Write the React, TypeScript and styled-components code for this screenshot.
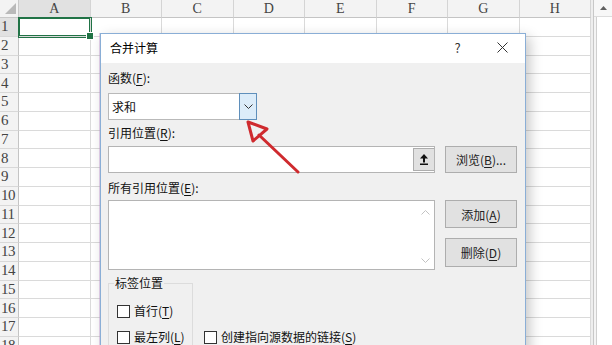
import React from 'react';
import styled, { createGlobalStyle } from 'styled-components';

const Global = createGlobalStyle`
  html, body { margin: 0; padding: 0; background: #fff; overflow: hidden; }
  #root { width: 612px; height: 345px; position: relative; overflow: hidden; }
  * { box-sizing: border-box; }
`;

const Screen = styled.div`
  position: relative;
  width: 612px;
  height: 345px;
  overflow: hidden;
  display: flex;
  background: #fff;
`;

/* ---------- spreadsheet ---------- */

const SheetGrid = styled.div`
  display: grid;
  grid-template-columns: 19px repeat(8, 71.5px);
  grid-template-rows: 18px;
  grid-auto-rows: 18.75px;
  align-content: start;
  font-family: "Liberation Serif", "DejaVu Serif", serif;
  color: #444;
`;

const Corner = styled.div`
  background: #f3f3f3;
  border-right: 1px solid #c8c8c8;
  border-bottom: 1px solid #c8c8c8;
  display: flex;
  align-items: flex-end;
  justify-content: flex-end;
  padding: 0 2px 3px 0;
`;

const ColHeader = styled.div<{ $active?: boolean }>`
  background: ${p => (p.$active ? '#e1e1e1' : '#f3f3f3')};
  border-right: 1px solid #d4d4d4;
  border-bottom: 1px solid #c4c4c4;
  display: flex;
  align-items: center;
  justify-content: center;
  font-size: 14px;
  padding-top: 1px;
`;

const RowHeader = styled.div<{ $active?: boolean }>`
  background: ${p => (p.$active ? '#e1e1e1' : '#f3f3f3')};
  border-right: 1px solid #c4c4c4;
  border-bottom: 1px solid #d8d8d8;
  display: flex;
  align-items: center;
  padding-left: 1px;
  font-size: 15px;
  letter-spacing: -0.5px;
`;

const Cell = styled.div<{ $selected?: boolean }>`
  position: relative;
  background: #fff;
  border-right: 1px solid #dadada;
  border-bottom: 1px solid #dadada;
  ${p =>
    p.$selected
      ? `
    box-shadow: 0 0 0 1px #217346, inset 0 0 0 1px #217346;
    z-index: 1;
    &::after {
      content: '';
      position: absolute;
      right: -4px;
      bottom: -4px;
      width: 6px;
      height: 6px;
      background: #217346;
      border: 1px solid #fff;
    }
  `
      : ''}
`;

const ScrollArea = styled.div`
  flex: 1;
  display: flex;
  background: #eeeeee;
  padding-left: 2px;
`;

const ScrollTrack = styled.div`
  flex: 1;
  display: flex;
  flex-direction: column;
  border-left: 1px solid #c8c8c8;
  background: #f4f4f4;
`;

const ScrollUp = styled.div`
  height: 17px;
  display: flex;
  align-items: center;
  justify-content: center;
  background: #f7f7f7;
  border-bottom: 1px solid #dcdcdc;
`;

const ScrollThumb = styled.div`
  flex: 1;
  margin-left: 2px;
  background: #fff;
  border-left: 1px solid #cfcfcf;
`;

/* ---------- dialog ---------- */

const Dialog = styled.div`
  position: absolute;
  left: 100px;
  top: 33px;
  width: 426px;
  height: 330px;
  border: 1px solid #8aaed6;
  background: #f0f0f0;
  box-shadow: -1px 0 0 rgba(190, 150, 205, 0.45), 4px 4px 12px rgba(0, 0, 0, 0.22);
  font-family: "Noto Sans CJK SC", "Noto Sans", sans-serif;
  font-size: 12px;
  color: #111;
  z-index: 5;
  display: flex;
  flex-direction: column;
`;

const TitleBar = styled.div`
  height: 29px;
  background: #fff;
  display: flex;
  align-items: center;
  padding-left: 9px;
  padding-bottom: 2px;
`;

const Title = styled.div`
  flex: 1;
  font-size: 12px;
  color: #000;
`;

const TitleButton = styled.div`
  width: 45px;
  height: 27px;
  display: flex;
  align-items: center;
  justify-content: center;
  font-size: 13px;
  color: #333;
`;

const Body = styled.div`
  padding: 0 7px;
  display: flex;
  flex-direction: column;
`;

const FieldLabel = styled.div<{ $top: number }>`
  margin-top: ${p => p.$top}px;
  height: 16px;
  line-height: 16px;
`;

const Row = styled.div<{ $top: number }>`
  margin-top: ${p => p.$top}px;
  display: grid;
  grid-template-columns: 327px 72px;
  column-gap: 10px;
  align-items: start;
`;

const SelectBox = styled.div`
  margin-top: 7px;
  width: 149px;
  height: 27px;
  display: flex;
  background: #fff;
  border: 1px solid #b9b9b9;
`;

const SelectValue = styled.div`
  flex: 1;
  padding-left: 3px;
  line-height: 25px;
`;

const DropButton = styled.div`
  width: 18px;
  margin: -1px -1px -1px 0;
  background: #dcecf9;
  border: 1px solid #5f8fbb;
  display: flex;
  align-items: center;
  justify-content: center;
`;

const TextField = styled.div`
  height: 27px;
  background: #fff;
  border: 1px solid #b4b4b4;
  display: flex;
  justify-content: flex-end;
`;

const PickButton = styled.div`
  width: 21px;
  margin: 1px 0;
  background: #e1e1e1;
  border: 1px solid #adadad;
  border-right: none;
  display: flex;
  align-items: center;
  justify-content: center;
`;

const Button = styled.div<{ $h: number }>`
  height: ${p => p.$h}px;
  background: #e1e1e1;
  border: 1px solid #adadad;
  display: flex;
  align-items: center;
  justify-content: center;
  color: #222;
`;

const ButtonStack = styled.div`
  display: flex;
  flex-direction: column;
  gap: 10px;
`;

const ListField = styled.div`
  height: 70px;
  background: #fff;
  border: 1px solid #b4b4b4;
  display: flex;
  justify-content: flex-end;
`;

const ListScroll = styled.div`
  width: 17px;
  display: flex;
  flex-direction: column;
  justify-content: space-between;
  align-items: center;
  padding: 9px 0 6px;
`;

const Bottom = styled.div`
  margin-top: 5px;
  display: flex;
  align-items: flex-start;
  gap: 11px;
`;

const GroupBox = styled.fieldset`
  width: 85px;
  margin: 0;
  padding: 0 0 14px 8px;
  border: 1px solid #dcdcdc;
  min-width: 0;
`;

const Legend = styled.legend`
  margin-left: -3px;
  padding: 0 1px;
  line-height: 16px;
  font-size: 12px;
`;

const CheckRow = styled.label<{ $top: number }>`
  margin-top: ${p => p.$top}px;
  height: 20px;
  display: flex;
  align-items: center;
  gap: 4px;
  white-space: nowrap;
`;

const CheckText = styled.span`
  line-height: 16px;
`;

const Box = styled.span`
  width: 13px;
  height: 13px;
  border: 1px solid #333;
  background: #fff;
  flex: none;
`;

const Arrow = styled.svg`
  position: absolute;
  left: 0;
  top: 0;
  width: 612px;
  height: 345px;
  pointer-events: none;
  z-index: 10;
`;

const U = styled.u`
  text-underline-offset: 2px;
`;

const COLS = ['A', 'B', 'C', 'D', 'E', 'F', 'G', 'H'];
const ROWS = Array.from({ length: 18 }, (_, i) => i + 1);

const Chevron = ({ up, color }: { up?: boolean; color: string }) => (
  <svg width="9" height="5" viewBox="0 0 9 5">
    <polyline
      points={up ? '0.5,4.5 4.5,0.5 8.5,4.5' : '0.5,0.5 4.5,4.5 8.5,0.5'}
      fill="none"
      stroke={color}
      strokeWidth="1"
    />
  </svg>
);

export default function App() {
  return (
    <Screen>
      <Global />
      <SheetGrid>
        <Corner>
          <svg width="11" height="11" viewBox="0 0 11 11">
            <polygon points="11,0 11,11 0,11" fill="#b9b9b9" />
          </svg>
        </Corner>
        {COLS.map(c => (
          <ColHeader key={c} $active={c === 'A'}>
            {c}
          </ColHeader>
        ))}
        {ROWS.map(r => (
          <React.Fragment key={r}>
            <RowHeader $active={r === 1}>{r}</RowHeader>
            {COLS.map(c => (
              <Cell key={c} $selected={r === 1 && c === 'A'} />
            ))}
          </React.Fragment>
        ))}
      </SheetGrid>
      <ScrollArea>
        <ScrollTrack>
          <ScrollUp>
            <svg width="7" height="4" viewBox="0 0 7 4">
              <polygon points="3.5,0 7,4 0,4" fill="#606060" />
            </svg>
          </ScrollUp>
          <ScrollThumb />
        </ScrollTrack>
      </ScrollArea>

      <Dialog>
        <TitleBar>
          <Title>合并计算</Title>
          <TitleButton>?</TitleButton>
          <TitleButton>
            <svg width="11" height="11" viewBox="0 0 11 11">
              <path d="M0.5 0.5 L10.5 10.5 M10.5 0.5 L0.5 10.5" stroke="#333" strokeWidth="1" />
            </svg>
          </TitleButton>
        </TitleBar>
        <Body>
          <FieldLabel $top={7}>
            函数(<U>F</U>):
          </FieldLabel>
          <SelectBox>
            <SelectValue>求和</SelectValue>
            <DropButton>
              <Chevron color="#333" />
            </DropButton>
          </SelectBox>

          <FieldLabel $top={5}>
            引用位置(<U>R</U>):
          </FieldLabel>
          <Row $top={5}>
            <TextField>
              <PickButton>
                <svg width="8" height="11" viewBox="0 0 8 11">
                  <polygon points="4,0 8,4.5 0,4.5" fill="#111" />
                  <rect x="3" y="4" width="2" height="4.5" fill="#111" />
                  <rect x="0" y="9.5" width="8" height="1.5" fill="#111" />
                </svg>
              </PickButton>
            </TextField>
            <Button $h={27}>
              浏览(<U>B</U>)...
            </Button>
          </Row>

          <FieldLabel $top={7}>
            所有引用位置(<U>E</U>):
          </FieldLabel>
          <Row $top={4}>
            <ListField>
              <ListScroll>
                <Chevron up color="#c2c2c2" />
                <Chevron color="#c2c2c2" />
              </ListScroll>
            </ListField>
            <ButtonStack>
              <Button $h={28}>
                添加(<U>A</U>)
              </Button>
              <Button $h={29}>
                删除(<U>D</U>)
              </Button>
            </ButtonStack>
          </Row>

          <Bottom>
            <GroupBox>
              <Legend>标签位置</Legend>
              <CheckRow $top={10}>
                <Box />
                <CheckText>
                  首行(<U>T</U>)
                </CheckText>
              </CheckRow>
              <CheckRow $top={6}>
                <Box />
                <CheckText>
                  最左列(<U>L</U>)
                </CheckText>
              </CheckRow>
            </GroupBox>
            <CheckRow $top={52}>
              <Box />
              <CheckText>
                创建指向源数据的链接(<U>S</U>)
              </CheckText>
            </CheckRow>
          </Bottom>
        </Body>
      </Dialog>

      <Arrow viewBox="0 0 612 345">
        <path
          d="M298 172 L259 135 M253 141 L248 122 L267 129 Z"
          fill="none"
          stroke="#cf2a2e"
          strokeWidth="3"
          strokeLinecap="round"
          strokeLinejoin="round"
        />
      </Arrow>
    </Screen>
  );
}
